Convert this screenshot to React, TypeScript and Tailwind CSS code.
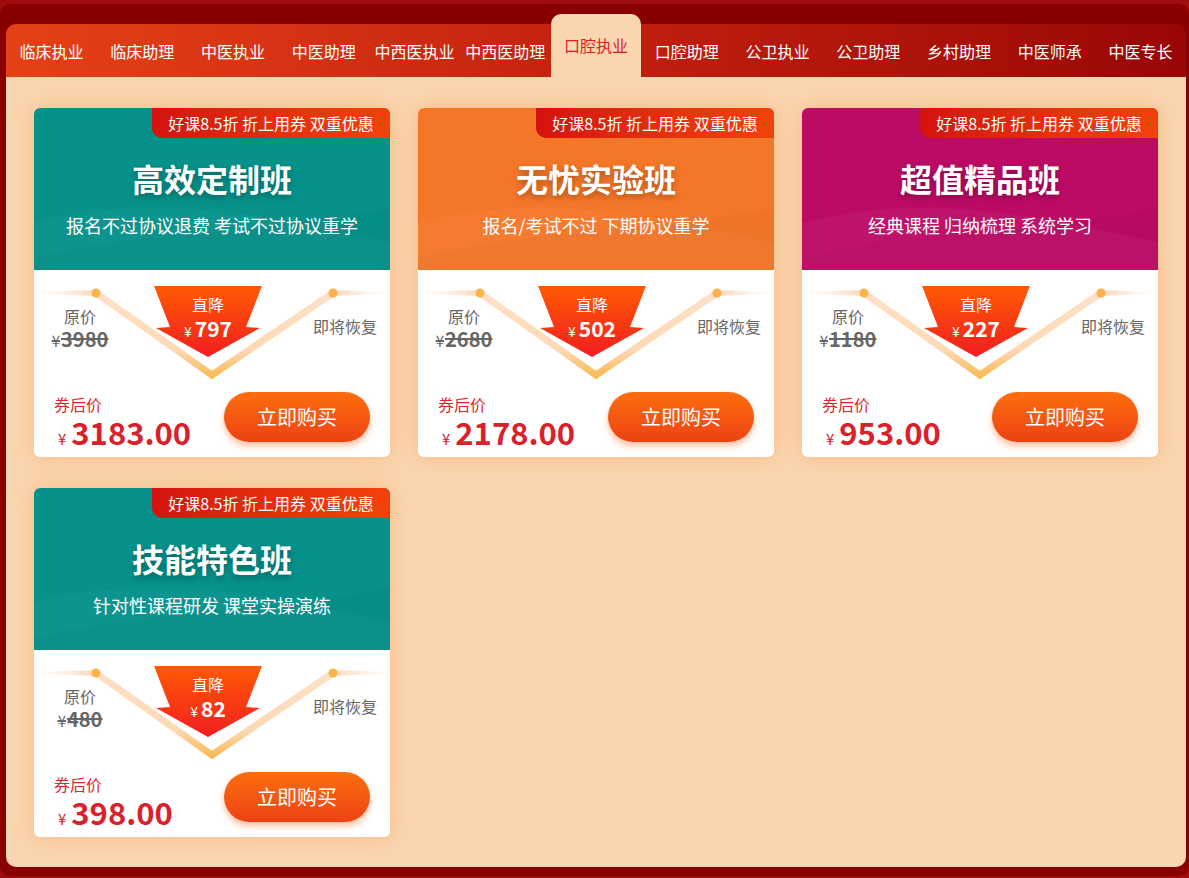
import React from "react";

const tabs = [
  "临床执业",
  "临床助理",
  "中医执业",
  "中医助理",
  "中西医执业",
  "中西医助理",
  "口腔执业",
  "口腔助理",
  "公卫执业",
  "公卫助理",
  "乡村助理",
  "中医师承",
  "中医专长",
];

type Card = {
  title: string;
  sub: string;
  bg: string;
  orig: string;
  drop: string;
  price: string;
};

const cards: Card[] = [
  { title: "高效定制班", sub: "报名不过协议退费 考试不过协议重学", bg: "bg-[#06918a]", orig: "3980", drop: "797", price: "3183.00" },
  { title: "无忧实验班", sub: "报名/考试不过 下期协议重学", bg: "bg-[#f47729]", orig: "2680", drop: "502", price: "2178.00" },
  { title: "超值精品班", sub: "经典课程 归纳梳理 系统学习", bg: "bg-[#bc0b65]", orig: "1180", drop: "227", price: "953.00" },
  { title: "技能特色班", sub: "针对性课程研发 课堂实操演练", bg: "bg-[#06918a]", orig: "480", drop: "82", price: "398.00" },
];

function Lines({ id }: { id: number }) {
  return (
    <svg className="absolute left-0 top-0 pointer-events-none" width="356" height="120" viewBox="0 0 356 120">
      <defs>
        <linearGradient id={`hl${id}`} x1="0" x2="1" y1="0" y2="0">
          <stop offset="0" stopColor="#fde6d2" stopOpacity="0" />
          <stop offset="1" stopColor="#fcd7b6" />
        </linearGradient>
        <linearGradient id={`hr${id}`} x1="1" x2="0" y1="0" y2="0">
          <stop offset="0" stopColor="#fde6d2" stopOpacity="0" />
          <stop offset="1" stopColor="#fcd7b6" />
        </linearGradient>
        <linearGradient id={`vg${id}`} gradientUnits="userSpaceOnUse" x1="0" y1="23" x2="0" y2="110">
          <stop offset="0" stopColor="#fde1c8" />
          <stop offset="0.65" stopColor="#fdd9b4" />
          <stop offset="1" stopColor="#fbb548" />
        </linearGradient>
      </defs>
      <polygon points="0,22 62,20 62,26 0,23.5" fill={`url(#hl${id})`} />
      <polygon points="356,22 299,20 299,26 356,23.5" fill={`url(#hr${id})`} />
      <polyline points="62,23 178,105 299,23" fill="none" stroke={`url(#vg${id})`} strokeWidth="7" strokeLinejoin="miter" />
      <circle cx="62" cy="23" r="4.5" fill="#fdb24a" />
      <circle cx="299" cy="23" r="4.5" fill="#fdb24a" />
    </svg>
  );
}

function Arrow({ id, drop }: { id: number; drop: string }) {
  return (
    <div className="relative w-[110px] h-[73px]">
      <svg className="absolute left-0 top-0" width="110" height="74" viewBox="0 0 110 74">
        <defs>
          <linearGradient id={`ag${id}`} x1="0" y1="0" x2="0" y2="1">
            <stop offset="0" stopColor="#ff5a04" />
            <stop offset="1" stopColor="#f11e21" />
          </linearGradient>
        </defs>
        <polygon
          points="1,1 109,1 93,42 107,43 55,72 3,43 17,42"
          fill={`url(#ag${id})`}
          stroke="#ffffff"
          strokeWidth="3"
          strokeLinejoin="miter"
          paintOrder="stroke"
        />
      </svg>
      <div className="relative flex flex-col items-center pt-[9px] text-white">
        <div className="text-[16px] leading-[20px]">直降</div>
        <div className="mt-[1px] leading-[26px] flex items-baseline">
          <span className="text-[14px] mr-[3px]">¥</span>
          <span className="text-[21px] font-bold">{drop}</span>
        </div>
      </div>
    </div>
  );
}

function CardView({ c, i }: { c: Card; i: number }) {
  return (
    <div className="w-[356px] h-[349px] rounded-[6px] overflow-hidden bg-white shadow-[0_0_22px_rgba(246,150,80,0.45)] flex flex-col">
      <div className={`relative h-[162px] ${c.bg} overflow-hidden`}>
        <svg className="absolute left-0 top-0" width="356" height="162" viewBox="0 0 356 162">
          <path d="M0,115 C90,90 200,95 356,135 L356,162 L0,162 Z" fill="#ffffff" fillOpacity="0.035" />
          <path d="M0,150 C120,120 240,125 356,100 L356,162 L0,162 Z" fill="#000000" fillOpacity="0.025" />
        </svg>
        <div className="absolute top-0 right-0 w-[238px] h-[30px] rounded-bl-[10px] bg-gradient-to-r from-[#d4120f] to-[#f2420b] flex items-center justify-center text-white text-[16px] leading-[30px]">
          好课8.5折 折上用券 双重优惠
        </div>
        <div className="relative flex flex-col items-center">
          <div className="mt-[50px] h-[40px] leading-[40px] text-[32px] font-bold text-white [text-shadow:0_3px_6px_rgba(0,0,0,0.3)]">
            {c.title}
          </div>
          <div className="mt-[15px] h-[24px] leading-[24px] text-[18px] text-white">{c.sub}</div>
        </div>
      </div>
      <div className="relative flex-1">
        <Lines id={i} />
        <div className="relative flex items-start pt-[15px] pl-[15px] pr-[13px]">
          <div className="w-[62px] mt-[21px] flex flex-col items-center text-[#666666]">
            <div className="text-[16px] leading-[20px]">原价</div>
            <div className="mt-[2px] leading-[22px] line-through decoration-[1.5px] flex items-baseline">
              <span className="text-[15px] mr-[1px] line-through">¥</span>
              <span className="text-[20px] font-bold line-through">{c.orig}</span>
            </div>
          </div>
          <div className="ml-[42px]">
            <Arrow id={i} drop={c.drop} />
          </div>
          <div className="ml-auto mt-[31px] text-[16px] leading-[20px] text-[#666666]">即将恢复</div>
        </div>
        <div className="relative flex items-start justify-between mt-[34px] pl-[20px] pr-[20px]">
          <div className="mt-[2px] flex flex-col">
            <div className="text-[16px] leading-[20px] text-[#e0262c]">券后价</div>
            <div className="flex items-baseline pl-[4px] mt-[1px] leading-[33px] text-[#d9202b]">
              <span className="text-[15px] mr-[5px]">¥</span>
              <span className="text-[31px] font-bold">{c.price}</span>
            </div>
          </div>
          <div className="w-[146px] h-[50px] rounded-full bg-gradient-to-b from-[#fd6d0e] to-[#ec4113] shadow-[0_4px_6px_rgba(240,110,40,0.45)] flex items-center justify-center text-white text-[20px]">
            立即购买
          </div>
        </div>
      </div>
    </div>
  );
}

export default function App() {
  return (
    <div className="w-[1189px] h-[878px] bg-[#9e0c0c] overflow-hidden font-['Noto_Sans_CJK_SC',sans-serif]">
      <div className="mt-[4px] h-[872px] rounded-[10px] bg-[#880000] pl-[6px] pr-[3px] pt-[20px]">
        <div className="flex items-end h-[53px] rounded-t-[10px] bg-gradient-to-r from-[#e54117] via-[#c3200f] to-[#990606]">
          {tabs.map((t, idx) =>
            idx === 6 ? (
              <div
                key={t}
                className="flex-1 h-[63px] rounded-t-[10px] bg-[#fad6b0] flex items-center justify-center text-[16px] text-[#d91f2b] pb-[1px]"
              >
                {t}
              </div>
            ) : (
              <div key={t} className="flex-1 h-[53px] flex items-center justify-center text-[16px] text-white whitespace-nowrap">
                {t}
              </div>
            )
          )}
        </div>
        <div className="h-[790px] rounded-b-[10px] bg-[#fad6b0] pt-[31px] pl-[28px]">
          <div className="grid grid-cols-[repeat(3,356px)] gap-x-[28px] gap-y-[31px]">
            {cards.map((c, i) => (
              <CardView key={c.title} c={c} i={i} />
            ))}
          </div>
        </div>
      </div>
    </div>
  );
}
